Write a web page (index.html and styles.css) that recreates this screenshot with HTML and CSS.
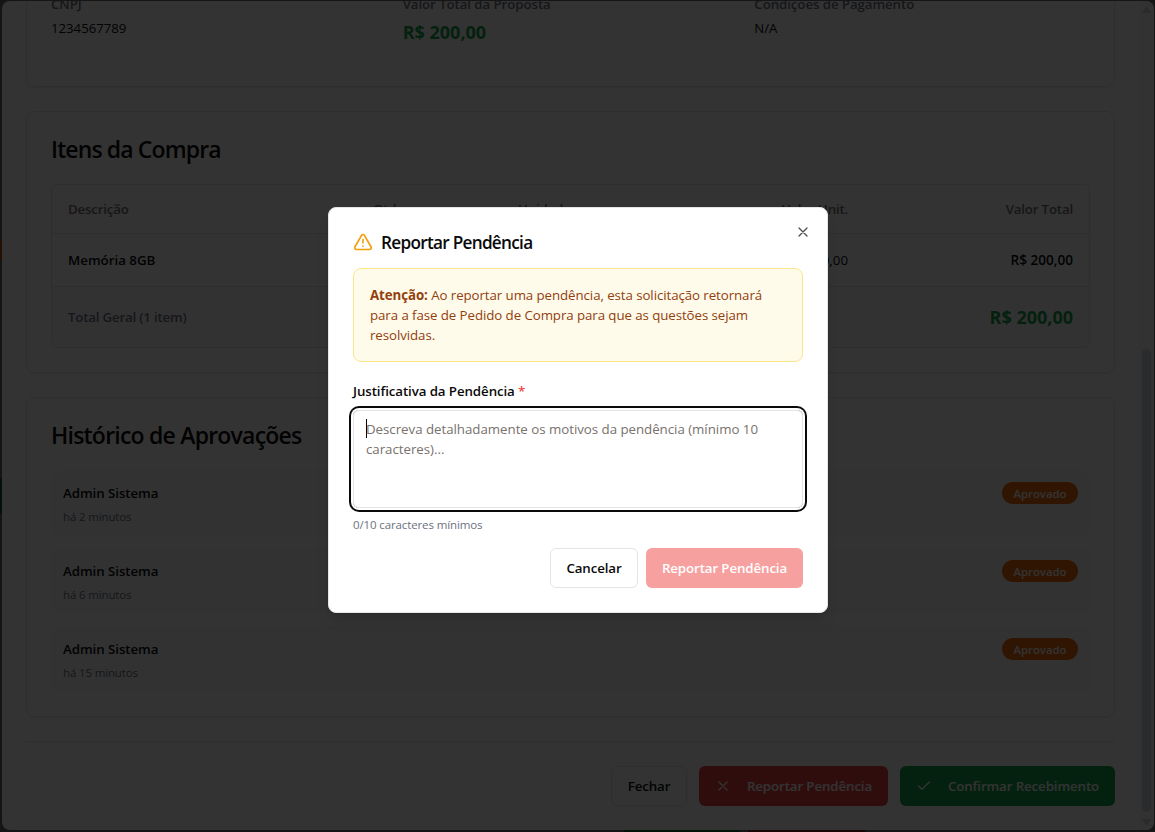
FILE: index.html
```html
<!DOCTYPE html>
<html lang="pt-BR">
<head>
<meta charset="utf-8">
<title>Reportar Pendência</title>
<link rel="stylesheet" href="styles.css">
</head>
<body>
<div class="page">
  <span class="peek peek-orange"></span>
  <span class="peek peek-green"></span>
  <span class="peek peek-confirm"></span>
  <span class="peek peek-reject"></span>
</div>

<main class="sheet">
  <div class="sheet-content">
    <section class="card summary">
      <div><p class="field-label">CNPJ</p><p class="field-value">1234567789</p></div>
      <div><p class="field-label">Valor Total da Proposta</p><p class="money">R$ 200,00</p></div>
      <div><p class="field-label">Condições de Pagamento</p><p class="field-value">N/A</p></div>
    </section>

    <section class="card">
      <h2 class="card-title title-items">Itens da Compra</h2>
      <div class="table">
        <div class="row row-head"><span>Descrição</span><span>Qtd.</span><span>Unidade</span><span class="end">Valor Unit.</span><span class="end">Valor Total</span></div>
        <div class="row row-item"><span class="strong">Memória 8GB</span><span>1</span><span>UN</span><span class="end">R$ 200,00</span><span class="end strong price">R$ 200,00</span></div>
        <div class="row-total"><span>Total Geral (1 item)</span><span class="money">R$ 200,00</span></div>
      </div>
    </section>

    <section class="card">
      <h2 class="card-title">Histórico de Aprovações</h2>
      <div class="history">
        <div class="entry"><div><p class="who">Admin Sistema</p><p class="when">há 2 minutos</p></div><span class="badge">Aprovado</span></div>
        <div class="entry"><div><p class="who">Admin Sistema</p><p class="when">há 6 minutos</p></div><span class="badge">Aprovado</span></div>
        <div class="entry"><div><p class="who">Admin Sistema</p><p class="when">há 15 minutos</p></div><span class="badge">Aprovado</span></div>
      </div>
    </section>

    <footer class="sheet-footer">
      <button class="btn btn-outline btn-close">Fechar</button>
      <button class="btn btn-red btn-report"><svg class="icon" viewBox="0 0 24 24"><path d="M18 6 6 18M6 6l12 12"/></svg>Reportar Pendência</button>
      <button class="btn btn-green btn-confirm"><svg class="icon" viewBox="0 0 24 24"><path d="M20 6 9 17l-5-5"/></svg>Confirmar Recebimento</button>
    </footer>
  </div>
  <div class="scrollbar">
    <span class="arrow arrow-up"></span>
    <span class="thumb"></span>
    <span class="arrow arrow-down"></span>
  </div>
</main>

<div class="overlay"></div>

<div class="modal" role="dialog">
  <button class="modal-close" aria-label="Fechar"><svg class="icon" viewBox="0 0 24 24"><path d="M18 6 6 18M6 6l12 12"/></svg></button>
  <h2 class="modal-title"><svg class="icon warn" viewBox="0 0 24 24"><path d="m21.73 18-8-14a2 2 0 0 0-3.48 0l-8 14A2 2 0 0 0 4 21h16a2 2 0 0 0 1.73-3M12 9v4M12 17h.01"/></svg><span>Reportar Pendência</span></h2>
  <div class="notice"><strong>Atenção:</strong> Ao reportar uma pendência, esta solicitação retornará<br>para a fase de Pedido de Compra para que as questões sejam<br>resolvidas.</div>
  <p class="label">Justificativa da Pendência <span class="required">*</span></p>
  <div class="textarea"><span class="caret"></span>Descreva detalhadamente os motivos da pendência (mínimo 10<br>caracteres)...</div>
  <p class="counter">0/10 caracteres mínimos</p>
  <div class="actions">
    <button class="btn btn-outline btn-cancel">Cancelar</button>
    <button class="btn btn-red btn-submit" disabled>Reportar Pendência</button>
  </div>
</div>
</body>
</html>
```

FILE: styles.css
```css
* { box-sizing: border-box; margin: 0; padding: 0; }

body {
  width: 1155px;
  height: 832px;
  overflow: hidden;
  font-family: "Open Sans", "Noto Sans", sans-serif;
  font-size: 13.3px;
  line-height: 20px;
  color: #0a0a0a;
}

.icon {
  width: 16px;
  height: 16px;
  flex: none;
  fill: none;
  stroke: currentColor;
  stroke-width: 2;
  stroke-linecap: round;
  stroke-linejoin: round;
}

/* page behind the sheet */
.page { position: fixed; inset: 0; background: #6c6c6c; }
.peek { position: absolute; }
.peek-orange { left: 0; top: 239px; width: 2px; height: 22px; background: #b04a10; }
.peek-green { left: 0; top: 478px; width: 2px; height: 36px; background: #0a5a2c; }
.peek-confirm { left: 624px; bottom: 0; width: 116px; height: 2px; background: #0a5a2c; }
.peek-reject { left: 748px; bottom: 0; width: 117px; height: 2px; background: #7a1a1a; }

/* sheet */
.sheet {
  position: fixed;
  inset: 1px 1px 2px 2px;
  display: flex;
  background: #fff;
  border-radius: 8px;
  overflow: hidden;
}
.sheet-content {
  flex: 1;
  display: flex;
  flex-direction: column;
  justify-content: flex-end;
  gap: 24px;
  padding: 0 24px 24px;
}
.card {
  flex: none;
  padding: 24px;
  border: 1px solid #e5e7eb;
  border-radius: 8px;
  box-shadow: 0 1px 2px rgba(0, 0, 0, .06);
}
.summary {
  display: grid;
  grid-template-columns: repeat(3, 1fr);
  gap: 16px;
  padding-bottom: 40px;
}
.field-label { margin-bottom: 4px; font-weight: 600; letter-spacing: -.09px; color: #6b7280; }
.field-value { font-size: 13.2px; }
.money { font-size: 18px; line-height: 28px; font-weight: 700; letter-spacing: 0; color: #16a34a; }
.card-title {
  height: 24px;
  margin-bottom: 24px;
  font-size: 23px;
  line-height: 26px;
  font-weight: 600;
  letter-spacing: -.78px;
}
.title-items { letter-spacing: -.88px; }

.table { border: 1px solid #e5e7eb; border-radius: 6px; }
.row { display: grid; grid-template-columns: 305px 145px 180px 182px 1fr; align-items: center; }
.row > span { padding: 0 16px; }
.row-head { height: 49px; border-bottom: 1px solid #e5e7eb; font-weight: 600; letter-spacing: -.18px; color: #78716c; }
.row-item { height: 53px; border-bottom: 1px solid #e5e7eb; }
.row-total {
  display: flex;
  align-items: center;
  justify-content: space-between;
  height: 60px;
  padding: 0 16px;
  background: #fbfbfc;
  border-radius: 0 0 6px 6px;
  font-weight: 600;
  letter-spacing: -.2px;
  color: #6b7280;
}
.end { text-align: right; }
.strong { font-weight: 600; }
.price { font-size: 13.6px; }

.history { display: flex; flex-direction: column; gap: 12px; }
.entry {
  display: flex;
  align-items: flex-start;
  justify-content: space-between;
  height: 66px;
  padding: 12px;
  background: #f9fafb;
  border-radius: 8px;
}
.who { padding-top: 1px; font-weight: 600; letter-spacing: -.06px; }
.when { margin-top: 6px; font-size: 11.5px; line-height: 16px; letter-spacing: -.15px; color: #6b7280; }
.badge {
  width: 76px;
  height: 22px;
  border-radius: 11px;
  background: #ea6a0c;
  color: #fff;
  font-size: 11.3px;
  line-height: 23px;
  font-weight: 600;
  text-align: center;
}

.sheet-footer {
  display: flex;
  justify-content: flex-end;
  gap: 12px;
  padding-top: 24px;
  border-top: 1px solid #e5e7eb;
}
.btn {
  display: flex;
  align-items: center;
  justify-content: center;
  gap: 16px;
  height: 40px;
  border: 0;
  border-radius: 6px;
  font: 600 13.3px/20px "Open Sans", "Noto Sans", sans-serif;
  letter-spacing: -.11px;
  white-space: nowrap;
}
.btn-outline { background: #fff; border: 1px solid #e5e5e5; color: #0a0a0a; }
.btn-red { background: #ef4444; color: #fff; }
.btn-green { background: #16a34a; color: #fff; }
.btn-close { width: 76px; }
.btn-report { width: 189px; }
.btn-confirm { width: 215px; }

.scrollbar {
  display: flex;
  flex-direction: column;
  align-items: center;
  width: 15px;
  padding: 5px 3px 4px 3px;
  background: #fafafa;
}
.arrow { width: 9px; height: 7px; background: #cbd5e1; }
.arrow-up { clip-path: polygon(50% 0, 100% 100%, 0 100%); }
.arrow-down { clip-path: polygon(0 0, 100% 0, 50% 100%); }
.thumb { width: 9px; height: 463px; margin: auto 0 7px; border-radius: 5px; background: #cbd5e1; }

.overlay { position: fixed; inset: 0; background: rgba(0, 0, 0, .8); }

/* modal */
.modal {
  position: fixed;
  left: 328px;
  top: 207px;
  width: 500px;
  height: 406px;
  padding: 24px;
  background: #fff;
  border: 1px solid #e5e5e5;
  border-radius: 8px;
  box-shadow: 0 10px 15px -3px rgba(0, 0, 0, .1), 0 4px 6px -4px rgba(0, 0, 0, .1);
}
.modal-close {
  position: absolute;
  right: 16px;
  top: 16px;
  width: 16px;
  height: 16px;
  border: 0;
  background: none;
  color: #0a0a0a;
  opacity: .7;
}
.modal-title {
  display: flex;
  align-items: center;
  gap: 8px;
  height: 20px;
  margin-bottom: 16px;
  font-size: 17.2px;
  font-weight: 600;
  letter-spacing: -.72px;
}
.modal-title span { padding-top: 2px; }
.warn { width: 20px; height: 20px; color: #f59e0b; }
.notice {
  height: 94px;
  padding: 16px;
  background: #fffbeb;
  border: 1px solid #fde68a;
  border-radius: 8px;
  color: #92400e;
  letter-spacing: -.08px;
  white-space: nowrap;
}
.label { margin: 19px 0 9px; font-weight: 600; letter-spacing: -.09px; }
.required { color: #ef4444; }
.textarea {
  position: relative;
  height: 98px;
  padding: 8px 12px;
  border: 1px solid #e5e5e5;
  border-radius: 6px;
  box-shadow: 0 0 0 2px #fff, 0 0 0 4px #0a0a0a;
  color: #78716c;
  letter-spacing: -.03px;
  white-space: nowrap;
}
.caret { position: absolute; left: 12px; top: 8px; width: 1px; height: 19px; background: #000; }
.counter { margin: 8px 0 15px; font-size: 11.5px; line-height: 17px; letter-spacing: -.12px; color: #6b7280; }
.actions { display: flex; justify-content: flex-end; gap: 8px; }
.btn-cancel { width: 88px; }
.btn-submit { width: 157px; opacity: .5; }
```
